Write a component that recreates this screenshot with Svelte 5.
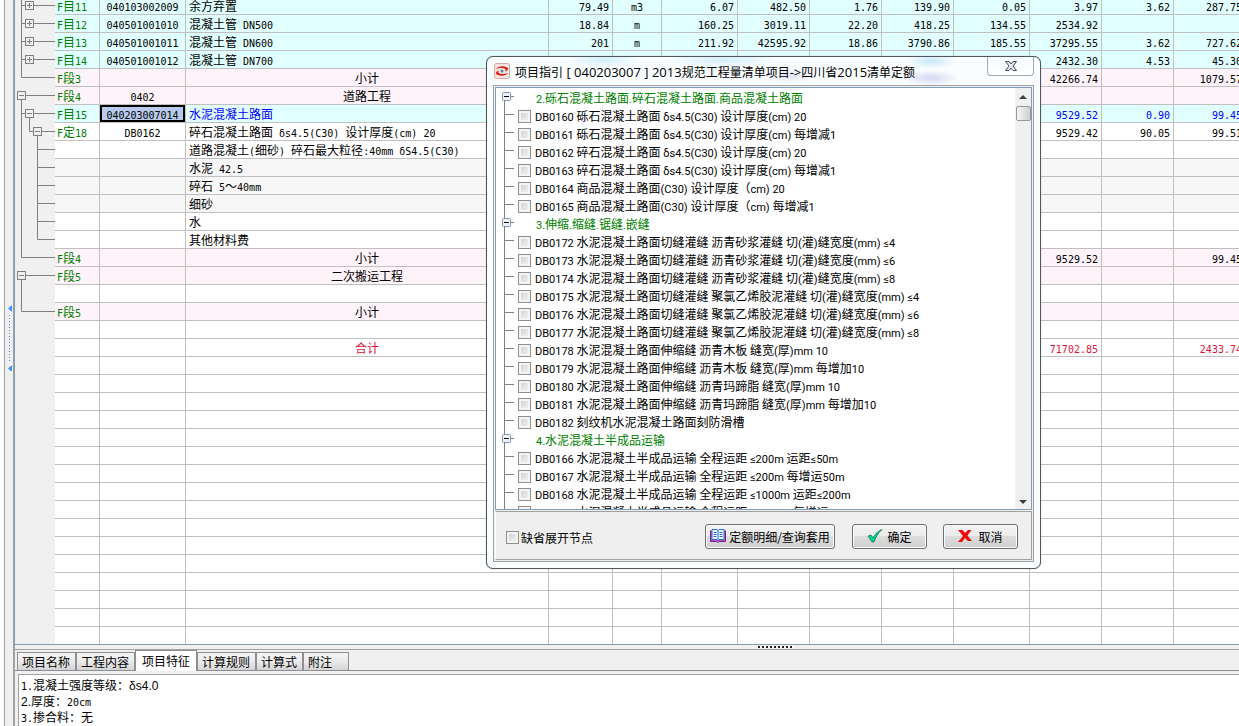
<script lang="ts">
  type Row = {
    tree?: string
    no?: string
    code?: string
    name?: string
    kind?: string
    values?: string[]
  }

  const widths = [40, 45, 86, 363, 64, 49, 76, 72, 72, 72, 76, 72, 72, 72]

  // tree: one character per level
  const items: Row[] = [
    { tree: '├+', no: 'F目11', code: '040103002009', name: '余方弃置', kind: 'item', values: ['79.49', 'm3', '6.07', '482.50', '1.76', '139.90', '0.05', '3.97', '3.62', '287.75'] },
    { tree: '├+', no: 'F目12', code: '040501001010', name: '混凝土管 DN500', kind: 'item', values: ['18.84', 'm', '160.25', '3019.11', '22.20', '418.25', '134.55', '2534.92', '', ''] },
    { tree: '├+', no: 'F目13', code: '040501001011', name: '混凝土管 DN600', kind: 'item', values: ['201', 'm', '211.92', '42595.92', '18.86', '3790.86', '185.55', '37295.55', '3.62', '727.62'] },
    { tree: '├+', no: 'F目14', code: '040501001012', name: '混凝土管 DN700', kind: 'item', values: ['', '', '', '', '', '', '', '2432.30', '4.53', '45.30'] },
    { tree: '└', no: 'F段3', name: '小计', kind: 'section', values: ['', '', '', '', '', '', '', '42266.74', '', '1079.57'] },
    { tree: '-', no: 'F段4', code: '0402', name: '道路工程', kind: 'section' },
    { tree: '├-', no: 'F目15', code: '040203007014', name: '水泥混凝土路面', kind: 'item current', values: ['', '', '', '', '', '', '', '9529.52', '0.90', '99.45'] },
    { tree: '│└-', no: 'F定18', code: 'DB0162', name: '碎石混凝土路面 δs4.5(C30) 设计厚度(cm) 20', values: ['', '', '', '', '', '', '', '9529.42', '90.05', '99.51'] },
    { tree: '│ ├', name: '道路混凝土(细砂) 碎石最大粒径:40mm δS4.5(C30)' },
    { tree: '│ ├', name: '水泥 42.5', kind: 'material' },
    { tree: '│ ├', name: '碎石 5～40mm', kind: 'material' },
    { tree: '│ ├', name: '细砂', kind: 'material' },
    { tree: '│ ├', name: '水' },
    { tree: '│ └', name: '其他材料费' },
    { tree: '└', no: 'F段4', name: '小计', kind: 'section', values: ['', '', '', '', '', '', '', '9529.52', '', '99.45'] },
    { tree: '-', no: 'F段5', name: '二次搬运工程', kind: 'section' },
    { tree: '│' },
    { tree: '└', no: 'F段5', name: '小计', kind: 'section' },
    {},
    { name: '合计', kind: 'total', values: ['', '', '', '', '', '', '', '71702.85', '', '2433.74'] }
  ]
  const rows: Row[] = [...items, ...Array.from({ length: 16 }, () => ({}))]
  const blank = Array(10).fill('')

  const groups = [
    {
      title: '2.砾石混凝土路面.碎石混凝土路面.商品混凝土路面',
      entries: [
        'DB0160 砾石混凝土路面 δs4.5(C30) 设计厚度(cm) 20',
        'DB0161 砾石混凝土路面 δs4.5(C30) 设计厚度(cm) 每增减1',
        'DB0162 碎石混凝土路面 δs4.5(C30) 设计厚度(cm) 20',
        'DB0163 碎石混凝土路面 δs4.5(C30) 设计厚度(cm) 每增减1',
        'DB0164 商品混凝土路面(C30) 设计厚度（cm) 20',
        'DB0165 商品混凝土路面(C30) 设计厚度（cm) 每增减1'
      ]
    },
    {
      title: '3.伸缩.缩缝.锯缝.嵌缝',
      entries: [
        'DB0172 水泥混凝土路面切缝灌缝 沥青砂浆灌缝 切(灌)缝宽度(mm) ≤4',
        'DB0173 水泥混凝土路面切缝灌缝 沥青砂浆灌缝 切(灌)缝宽度(mm) ≤6',
        'DB0174 水泥混凝土路面切缝灌缝 沥青砂浆灌缝 切(灌)缝宽度(mm) ≤8',
        'DB0175 水泥混凝土路面切缝灌缝 聚氯乙烯胶泥灌缝 切(灌)缝宽度(mm) ≤4',
        'DB0176 水泥混凝土路面切缝灌缝 聚氯乙烯胶泥灌缝 切(灌)缝宽度(mm) ≤6',
        'DB0177 水泥混凝土路面切缝灌缝 聚氯乙烯胶泥灌缝 切(灌)缝宽度(mm) ≤8',
        'DB0178 水泥混凝土路面伸缩缝 沥青木板 缝宽(厚)mm 10',
        'DB0179 水泥混凝土路面伸缩缝 沥青木板 缝宽(厚)mm 每增加10',
        'DB0180 水泥混凝土路面伸缩缝 沥青玛蹄脂 缝宽(厚)mm 10',
        'DB0181 水泥混凝土路面伸缩缝 沥青玛蹄脂 缝宽(厚)mm 每增加10',
        'DB0182 刻纹机水泥混凝土路面刻防滑槽'
      ]
    },
    {
      title: '4.水泥混凝土半成品运输',
      entries: [
        'DB0166 水泥混凝土半成品运输 全程运距 ≤200m 运距≤50m',
        'DB0167 水泥混凝土半成品运输 全程运距 ≤200m 每增运50m',
        'DB0168 水泥混凝土半成品运输 全程运距 ≤1000m 运距≤200m',
        'DB0169 水泥混凝土半成品运输 全程运距 ≤1000m 每增运100m'
      ]
    }
  ]

  const tabs = ['项目名称', '工程内容', '项目特征', '计算规则', '计算式', '附注']
  let activeTab = $state('项目特征')
  let open = $state(true)

  // split text into Chinese and Latin runs, each gets its own face and size
  function runs(text: string) {
    return text.match(/[\u3000-\u9fff\uff00-\uffef]+|[^\u3000-\u9fff\uff00-\uffef]+/g) ?? []
  }

  function isLatin(run: string) {
    return !/[\u3000-\u9fff\uff00-\uffef]/.test(run)
  }

  function treePath(tree: string) {
    let d = ''
    let start = -1
    ;[...tree].forEach((c, i) => {
      const x = 6.5 + i * 8
      if (c === '│' || c === '├') d += `M${x} 0V18`
      if (c === '└') d += `M${x} 0V8.5`
      if (c === '-') d += `M${x} 8.5V18`
      if (start < 0 && '├└+-'.includes(c)) start = x
    })
    if (start > 0) d += `M${start} 8.5H40`
    return d
  }

  function boxLevel(tree: string) {
    return Math.max(tree.indexOf('+'), tree.indexOf('-'))
  }
</script>

{#snippet mixed(text: string)}
  {#each runs(text) as run}{#if isLatin(run)}<span class="latin">{run}</span>{:else}{run}{/if}{/each}
{/snippet}

<div class="app">
  <aside class="side">
    <div class="strip">
      <svg width="5" height="66" viewBox="0 0 5 66">
        <path d="M4 0v7L0 3.5zM4 60v7L0 63.5z" fill="#3399ff" />
        <path d="M1.5 10V56" stroke="#3399ff" stroke-dasharray="1 2" />
      </svg>
    </div>
  </aside>

  <main>
    <div class="grid">
      <table>
        <colgroup>
          {#each widths as w}
            <col style="width: {w}px" />
          {/each}
        </colgroup>
        <tbody>
          {#each rows as row}
            <tr class={row.kind}>
              <td class="tree">
                {#if row.tree}
                  {@const level = boxLevel(row.tree)}
                  <svg width="40" height="18" viewBox="0 0 40 18">
                    <path d={treePath(row.tree)} />
                    {#if level >= 0}
                      <g transform="translate({level * 8} 0)">
                        <rect x="2.5" y="4.5" width="8" height="8" />
                        <path d={row.tree[level] === '+' ? 'M4 8.5H9M6.5 6V11' : 'M4 8.5H9'} />
                      </g>
                    {/if}
                  </svg>
                {/if}
              </td>
              <td class="no">{@render mixed(row.no ?? '')}</td>
              <td class="code">{@render mixed(row.code ?? '')}</td>
              <td class="name">{@render mixed(row.name ?? '')}</td>
              {#each row.values ?? blank as value, i}
                <td class={i === 1 ? 'unit' : 'num'}><span class="latin">{value}</span></td>
              {/each}
            </tr>
          {/each}
        </tbody>
      </table>
    </div>

    <div class="splitter"><span></span></div>

    <section class="detail">
      <div class="tabs" role="tablist">
        {#each tabs as tab}
          <button role="tab" aria-selected={tab === activeTab} class:active={tab === activeTab} class:last={tab === '附注'} onclick={() => (activeTab = tab)}>{tab}</button>
        {/each}
      </div>
      <div class="feature">
        <p>{@render mixed('1.混凝土强度等级：')}<span class="arial">δs4.0</span></p>
        <p><span class="arial">2.</span>{@render mixed('厚度：20cm')}</p>
        <p>{@render mixed('3.掺合料：无')}</p>
      </div>
    </section>
  </main>

  {#if open}
    <div class="dialog" role="dialog" aria-labelledby="dialog-title">
      <header>
        <svg class="logo" width="16" height="16" viewBox="0 0 16 16">
          <rect x="0.5" y="0.5" width="15" height="15" rx="2" fill="#f6e4e0" stroke="#d8a8a0" />
          <path d="M2 6C4 3 10 2 14 5C14.500 7 13 8 11 8.500C13 6 10 4.500 6 5C4 5.200 3 6 2 6z" fill="#d8281c" />
          <path d="M14 10C12 13 6 14 2 11C1.500 9 3 8 5 7.500C3 10 6 11.500 10 11C12 10.800 13 10 14 10z" fill="#d8281c" />
          <circle cx="8" cy="8" r="1.500" fill="#6b7f96" />
        </svg>
        <h1 id="dialog-title">{@render mixed('项目指引 [ 040203007 ] 2013规范工程量清单项目->四川省2015清单定额')}</h1>
        <button class="close" aria-label="关闭" onclick={() => (open = false)}>
          <svg width="12" height="10" viewBox="0 0 12 10">
            <path d="M0.5 0.5H4L6 3L8 0.5H11.500L8 5L11.500 9.500H8L6 7L4 9.500H0.5L4 5z" fill="#e8eaf0" stroke="#484e5e" />
          </svg>
        </button>
      </header>

      <div class="body">
        <div class="list">
          <div class="entries">
            {#each groups as group, g}
              <div class="line title">
                <svg width="14" height="18" viewBox="0 0 14 18">
                  <path d={g === 0 ? 'M4.500 7V18' : 'M4.500 0V18'} />
                  <path d="M10 7.500H14" />
                  <rect class="box" x="2.500" y="3.500" width="8" height="8" rx="1" />
                  <path class="minus" d="M4 7.500H9" />
                </svg>
                <span class="text">{@render mixed(group.title)}</span>
              </div>
              {#each group.entries as entry}
                <label class="line">
                  <svg width="14" height="18" viewBox="0 0 14 18">
                    <path d="M4.500 0V18M4 7.500H14" />
                  </svg>
                  <input type="checkbox" />
                  <span class="text">{@render mixed(entry)}</span>
                </label>
              {/each}
            {/each}
          </div>
          <div class="scrollbar">
            <i class="up"></i>
            <i class="thumb"></i>
            <i class="down"></i>
          </div>
        </div>

        <footer>
          <label><input type="checkbox" /><span>缺省展开节点</span></label>
          <button>
            <svg width="16" height="14" viewBox="0 0 16 14">
              <path d="M0.5 1.500V12.500H7L8 13.500L9 12.500H15.500V1.500" fill="#b65ac0" stroke="#7a1d8c" />
              <path d="M2 0.5H7L8 1.500L9 0.5H14V10.500H9L8 11.500L7 10.500H2z" fill="#e8f6ff" stroke="#2d6fd0" />
              <path d="M8 1V11M3.500 3.500H6.500M3.500 5.500H6.500M3.500 7.500H6.500M9.500 3.500H12.500M9.500 5.500H12.500M9.500 7.500H12.500" stroke="#2d6fd0" />
            </svg>
            定额明细/查询套用
          </button>
          <button class="short ok">
            <svg width="16" height="14" viewBox="0 0 16 14">
              <path d="M1 7L4 6L6 9C8 5 11 2 15 0.500C11 4 9 8 7 13H5z" fill="#00d890" stroke="#0a6a4a" stroke-width="0.700" />
            </svg>
            确定
          </button>
          <button class="short cancel">
            <svg width="14" height="12" viewBox="0 0 14 12">
              <path d="M0 0H4.500L7 3L10 0H13.500L9.500 5.500L14 11H10L7 8L4 12H0L5 6z" fill="#f00808" />
            </svg>
            取消
          </button>
        </footer>
      </div>
    </div>
  {/if}
</div>

<style>
  :global(body) {
    overflow: hidden;
  }

  .app {
    position: relative;
    display: flex;
    height: 100vh;
    background: #f0f0f0;
    color: #000;
    font: 12px/17px 'Noto Sans CJK SC', sans-serif;
  }

  .latin {
    font-family: 'DejaVu Sans Mono', monospace;
    font-size: 10px;
    line-height: 10px;
    white-space: pre;
  }

  .arial {
    font-family: 'Liberation Sans', sans-serif;
    line-height: 12px;
  }

  .side {
    display: flex;
    flex: none;
    box-sizing: border-box;
    width: 14px;
    padding-left: 4px;
    background: #fff;
  }

  .strip {
    flex: 1;
    box-sizing: border-box;
    padding: 305px 0 0 3px;
    background: #f0f0f0;
    border-left: 1px solid #a0a0a0;
    border-right: 2px solid #a0a0a0;
  }

  .strip svg {
    display: block;
  }

  main {
    display: flex;
    flex: 1;
    flex-direction: column;
    min-width: 0;
  }

  .grid {
    flex: 1;
    min-height: 0;
    overflow: hidden;
    background: #fff;
    border-left: 1px solid #7f9db9;
    border-bottom: 1px solid #7f9db9;
  }

  /* scrolled a few pixels down */
  table {
    width: 1231px;
    margin-top: -3px;
    border-collapse: separate;
    border-spacing: 0;
    table-layout: fixed;
  }

  td {
    box-sizing: border-box;
    height: 18px;
    padding: 0 3px;
    overflow: hidden;
    border-right: 1px solid #c0c0c0;
    border-bottom: 1px solid #c0c0c0;
    line-height: 17px;
    white-space: nowrap;
  }

  .tree {
    padding: 0;
    background: #f0f0f0;
    border: none;
  }

  .tree svg {
    display: block;
    fill: none;
    stroke: #808080;
  }

  .tree rect {
    fill: #f0f0f0;
  }

  .no {
    padding-left: 2px;
    color: #008000;
  }

  .code,
  .unit,
  .section .name,
  .total .name {
    text-align: center;
  }

  .num {
    text-align: right;
  }

  .item td:not(.tree) {
    background: #e1ffff;
  }

  .section td:not(.tree) {
    background: #fff3fa;
  }

  .material td:not(.tree) {
    background: #f7f7f7;
  }

  .current .name,
  .current .num {
    color: #0000ff;
  }

  .current .code:not(.tree) {
    background: #b8caec;
    box-shadow: inset 0 0 0 2px #000;
  }

  .total {
    color: #dc143c;
  }

  .splitter {
    flex: none;
    box-sizing: border-box;
    height: 5px;
    padding: 1px 0 0 744px;
    border-bottom: 1px solid #a0a0a0;
  }

  .splitter span {
    display: block;
    width: 35px;
    height: 2px;
    background: repeating-linear-gradient(90deg, #202020 0 2px, #fff 2px 4px);
  }

  .detail {
    display: flex;
    flex: none;
    flex-direction: column;
    height: 76px;
    border-left: 1px solid #a0a0a0;
  }

  .tabs {
    display: flex;
    align-items: flex-end;
    height: 20px;
    padding-left: 2px;
    border-bottom: 1px solid #8e8f96;
  }

  button {
    color: #000;
    font: 12px/17px 'Noto Sans CJK SC', sans-serif;
  }

  .tabs button {
    height: 18px;
    padding: 0 5px 0 4px;
    background: linear-gradient(#f4f4f4, #ebebeb 50%, #d4d4d4);
    border: 1px solid #8e8f96;
    border-bottom: none;
    line-height: 16px;
  }

  .tabs .active {
    height: 21px;
    margin-bottom: -1px;
    padding: 0 6px;
    background: #fff;
  }

  .tabs .last {
    padding-right: 16px;
  }

  .feature {
    flex: 1;
    margin: 3px 0 0 3px;
    padding: 2px;
    overflow: hidden;
    background: #fff;
    border: solid #a0a0a0;
    border-width: 1px 0 0 1px;
  }

  .feature p {
    height: 16px;
    margin: 0;
    line-height: 16px;
  }

  .dialog {
    position: absolute;
    top: 56px;
    left: 486px;
    display: flex;
    flex-direction: column;
    box-sizing: border-box;
    width: 555px;
    height: 513px;
    padding: 0 6px 6px;
    background: #fafdfe;
    border: 1px solid #4f565e;
    border-radius: 7px;
    box-shadow: 0 0 1px #8a9098;
  }

  header {
    display: flex;
    align-items: center;
    gap: 5px;
    height: 28px;
    padding-left: 1px;
    background:
      radial-gradient(26px 8px at 295px 19px, #c9cde880, transparent),
      radial-gradient(28px 8px at 438px 21px, #c9cdf0cc, transparent),
      radial-gradient(26px 8px at 438px 4px, #bfe2f6cc, transparent),
      radial-gradient(60px 8px at 230px 3px, #d4eefa, transparent),
      radial-gradient(40px 8px at 110px 3px, #d4eefa, transparent);
  }

  h1 {
    flex: 1;
    margin: 0;
    font-size: 12px;
    font-weight: normal;
    line-height: 17px;
    white-space: nowrap;
  }

  h1 .latin {
    font-family: 'Open Sans', sans-serif;
    font-size: 13px;
  }

  .close {
    display: flex;
    align-self: flex-start;
    align-items: center;
    justify-content: center;
    width: 47px;
    height: 19px;
    padding: 0;
    background: linear-gradient(#f4fbff, #fff);
    border: 1px solid #a3aab2;
    border-top: none;
    border-radius: 0 0 4px 4px;
  }

  .body {
    display: flex;
    flex: 1;
    flex-direction: column;
    min-height: 0;
    padding: 1px;
    background: #f0f0f0;
    border: 1px solid #a0a0a0;
  }

  .list {
    display: flex;
    flex: 1;
    min-height: 0;
    background: #fff;
    border: 1px solid #7f9db9;
  }

  .entries {
    flex: 1;
    min-width: 0;
    padding: 1px 0 0 4px;
    overflow: hidden;
  }

  .line {
    display: flex;
    align-items: center;
    height: 18px;
    line-height: 18px;
    white-space: nowrap;
  }

  .line svg {
    flex: none;
    margin-right: 4px;
    fill: none;
    stroke: #808080;
  }

  .line .box {
    fill: #eef2f8;
    stroke: #8496ad;
  }

  .line .minus {
    stroke: #000;
  }

  .line .latin {
    font-family: Roboto, sans-serif;
    font-size: 11px;
  }

  .title {
    color: #008000;
  }

  .title .text {
    margin-left: 18px;
  }

  input {
    flex: none;
    appearance: none;
    box-sizing: border-box;
    width: 13px;
    height: 13px;
    margin: 0 4px 0 0;
    background: linear-gradient(135deg, #c8cdd4, #f8f8f8);
    border: 1px solid #8e8f8f;
    box-shadow: inset 0 0 0 2px #f4f4f4;
  }

  .scrollbar {
    display: flex;
    flex-direction: column;
    align-items: center;
    width: 16px;
    background: #f0f0f0;
  }

  .up,
  .down {
    width: 0;
    border: 4px solid transparent;
  }

  .up {
    margin-top: 3px;
    border-bottom-color: #404040;
  }

  .down {
    margin: auto 0 1px;
    border-top-color: #404040;
  }

  .thumb {
    box-sizing: border-box;
    width: 15px;
    height: 15px;
    margin-top: 7px;
    background: linear-gradient(90deg, #f8f8f8, #cfcfd2);
    border: 1px solid #979797;
    border-radius: 2px;
  }

  footer {
    display: flex;
    align-items: center;
    flex: none;
    height: 46px;
    margin-top: 1px;
    padding: 1px 13px 0 10px;
    background: #efefef;
    border: 1px solid #a0a0a0;
    border-left-color: #fff;
    box-sizing: content-box;
  }

  footer label {
    display: flex;
    flex: 1;
    align-items: center;
    margin-top: 3px;
  }

  footer input {
    margin-right: 2px;
  }

  footer button {
    display: flex;
    align-items: center;
    justify-content: center;
    gap: 3px;
    width: 130px;
    height: 25px;
    padding: 0;
    background: linear-gradient(#f3f3f3, #ebebeb 50%, #dddddd 50%, #cfcfcf);
    border: 1px solid #707070;
    border-radius: 3px;
    box-shadow: inset 0 0 0 1px #fafafa;
    white-space: nowrap;
  }

  footer .short {
    gap: 4px;
    width: 75px;
  }

  footer .ok {
    margin: 0 16px 0 17px;
  }

  footer .cancel {
    gap: 6px;
  }
</style>
